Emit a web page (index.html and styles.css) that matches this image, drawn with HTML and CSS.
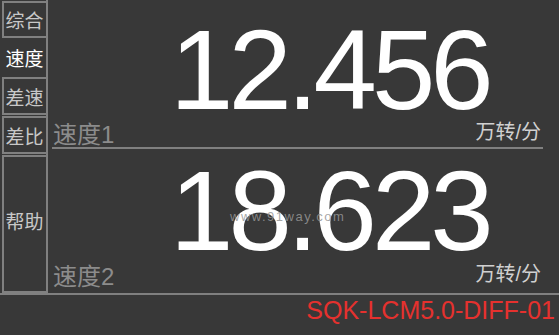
FILE: index.html
```html
<!DOCTYPE html>
<html lang="zh">
<head>
<meta charset="utf-8">
<link rel="stylesheet" href="styles.css">
</head>
<body>
<div class="screen">
  <div class="frame">
    <nav class="sidebar">
      <div class="tab tab-first">综合</div>
      <div class="tab tab-active">速度</div>
      <div class="tab">差速</div>
      <div class="tab">差比</div>
      <div class="tab tab-help">帮助</div>
    </nav>
    <main class="main">
      <section class="panel panel-top">
        <div class="value">12.456</div>
        <div class="labels">
          <span class="name">速度1</span>
          <span class="unit">万转/分</span>
        </div>
      </section>
      <section class="panel panel-bottom">
        <div class="value">18.623</div>
        <div class="labels">
          <span class="name">速度2</span>
          <span class="unit">万转/分</span>
        </div>
      </section>
    </main>
  </div>
  <footer class="footer">SQK-LCM5.0-DIFF-01</footer>
  <div class="watermark">www.91way.com</div>
</div>
</body>
</html>
```
FILE: styles.css
```css
* { box-sizing: border-box; }
html, body {
  margin: 0;
  padding: 0;
  background: #383838;
}
.screen {
  position: relative;
  width: 559px;
  height: 335px;
  background: #383838;
  font-family: "Liberation Sans", "Noto Sans CJK SC", sans-serif;
}
.frame {
  display: flex;
  height: 295px;
  border-bottom: 2px solid #808080;
}
.sidebar {
  width: 48px;
  border-right: 2px solid #808080;
  padding-left: 2px;
  padding-top: 1px;
  display: flex;
  flex-direction: column;
  gap: 1px;
}
.tab {
  height: 38px;
  border: 2px solid #808080;
  border-right: none;
  color: #c8c8c8;
  font-size: 19px;
  display: flex;
  align-items: center;
  justify-content: center;
  padding-right: 1px;
  font-family: "Noto Sans CJK SC", sans-serif;
}
.tab-first { height: 37px; }
.tab-active {
  border-color: transparent;
  color: #ffffff;
  height: 37px;
}
.tab-help {
  flex: 1;
  padding-bottom: 8px;
}
.main {
  flex: 1;
  display: flex;
  flex-direction: column;
}
.panel {
  display: flex;
  flex-direction: column;
}
.panel-top {
  height: 149px;
  padding-top: 20px;
}
.panel-top .labels {
  border-bottom: 2px solid #808080;
  margin-left: 4px;
  margin-right: 16px;
  padding-left: 1px;
  padding-right: 2px;
}
.panel-bottom {
  flex: 1;
  padding-top: 12px;
}
.panel-bottom .labels {
  margin-left: 4px;
  margin-right: 16px;
  padding-left: 1px;
  padding-right: 2px;
}
.value {
  height: 100px;
  line-height: 100px;
  font-size: 114px;
  letter-spacing: -5px;
  color: #ffffff;
  padding-left: 122px;
  font-family: "Liberation Sans", sans-serif;
}
.labels {
  display: flex;
  justify-content: space-between;
  align-items: center;
  height: 29px;
  padding-bottom: 2px;
}
.name {
  font-size: 24px;
  color: #8c8c8c;
}
.unit {
  font-size: 20px;
  color: #d0d0d0;
  margin-top: -4px;
}
.footer {
  display: flex;
  justify-content: flex-end;
  padding-right: 4px;
  height: 30px;
  align-items: center;
  font-size: 25px;
  color: #e5312e;
  font-family: "Liberation Sans", sans-serif;
}
.watermark {
  position: absolute;
  left: 230px;
  top: 209px;
  font-size: 13px;
  letter-spacing: 1.5px;
  color: rgba(150, 150, 150, 0.85);
  font-family: "Liberation Sans", sans-serif;
}
```
